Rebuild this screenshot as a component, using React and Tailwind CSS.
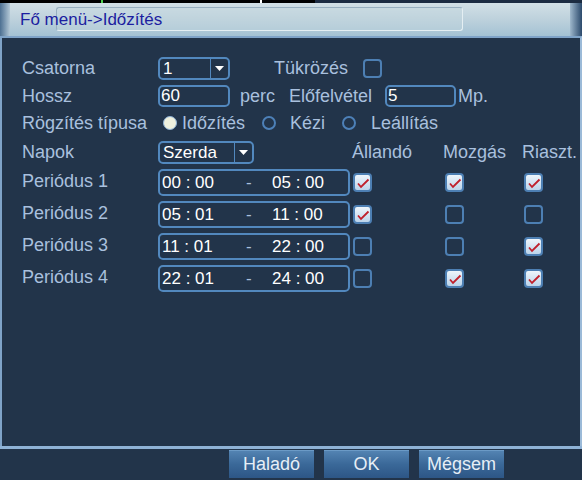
import React from "react";

const font = { fontFamily: '"Liberation Sans", Arial, sans-serif' };

function Check({ on }) {
  return (
    <div
      className={`w-[19px] h-[19px] rounded-[4px] border-2 border-[#4d7fb3] flex items-center justify-center ${
        on ? "bg-gradient-to-b from-[#eef5fb] to-[#bcd4ea]" : ""
      }`}
    >
      {on && (
        <svg width="14" height="12" viewBox="0 0 14 12">
          <path d="M2 6.5 L5 10 L12.5 2.5" fill="none" stroke="#c0202c" strokeWidth="1.8" />
        </svg>
      )}
    </div>
  );
}

function Radio({ on }) {
  return on ? (
    <div className="w-[14px] h-[14px] rounded-full bg-[#eef0de] border border-[#8fb2d6]" />
  ) : (
    <div className="w-[14px] h-[14px] rounded-full border-2 border-[#4d80b8]" />
  );
}

function Box({ className = "", children }) {
  return (
    <div
      className={`border-2 border-[#5288be] rounded-[5px] flex items-center text-white text-[17px] ${className}`}
    >
      {children}
    </div>
  );
}

function Select({ value, width }) {
  return (
    <Box className={`${width} h-[23px] pl-[3px]`}>
      <span className="flex-1 leading-none">{value}</span>
      <div className="w-[18px] h-full border-l border-[#5288be] flex items-center justify-center">
        <svg width="9" height="5" viewBox="0 0 9 5">
          <path d="M0 0 H9 L4.5 5 Z" fill="#ffffff" />
        </svg>
      </div>
    </Box>
  );
}

const periods = [
  ["00 : 00", "05 : 00", [true, true, true]],
  ["05 : 01", "11 : 00", [true, false, false]],
  ["11 : 01", "22 : 00", [false, false, true]],
  ["22 : 01", "24 : 00", [false, true, true]],
];

export default function App() {
  return (
    <div className="w-[582px] h-[480px] bg-[#22344a] text-[#a9c0de] text-[18px] overflow-hidden" style={font}>
      {/* top strip */}
      <div className="h-[3px] flex">
        <div className="w-[315px] bg-black flex">
          <div className="w-[101px]" />
          <div className="w-[2px] bg-[#4cd04c]" />
          <div className="w-[157px]" />
          <div className="w-[2px] bg-white" />
        </div>
        <div className="flex-1 bg-[#1c2c42]" />
      </div>

      {/* header */}
      <div className="h-[33px] flex bg-gradient-to-b from-[#d2e0e6] via-[#bdd1dc] to-[#a4c2d4]">
        <div className="w-[10px] bg-gradient-to-r from-[#4d7092] to-[#b3c8d6]" />
        <div className="flex-1 relative flex items-center">
          <div className="absolute left-[46px] top-[4px] w-[407px] h-[24px] rounded-[3px] border border-[#98b0c0] border-b-[#e4eef2] border-r-[#e4eef2] bg-[#c4d6de]/40" />
          <span className="relative ml-[10px] text-[#1c1ea0] text-[17px]">Fő menü-&gt;Időzítés</span>
        </div>
        <div className="w-[12px] bg-gradient-to-r from-[#9fb8cc] to-[#2c4a6c]" />
      </div>

      {/* main panel */}
      <div className="h-[410px] border-t-[2px] border-x-[2px] border-[#7fa3c8] border-r-[#9bbad8] pt-[19px] pl-[20px]">
        {/* Csatorna */}
        <div className="flex items-center h-[23px]">
          <div className="w-[136px]">Csatorna</div>
          <Select value="1" width="w-[72px]" />
          <div className="ml-[44px] w-[89px]">Tükrözés</div>
          <Check on={false} />
        </div>

        {/* Hossz */}
        <div className="flex items-center h-[22px] mt-[5px]">
          <div className="w-[136px]">Hossz</div>
          <Box className="w-[72px] h-[22px] pl-[1px]">60</Box>
          <div className="w-[59px] pl-[10px]">perc</div>
          <div className="w-[96px]">Előfelvétel</div>
          <Box className="w-[71px] h-[22px] pl-[1px]">5</Box>
          <div className="ml-[2px]">Mp.</div>
        </div>

        {/* Rögzítés típusa */}
        <div className="flex items-center h-[22px] mt-[5px]">
          <div className="w-[141px]">Rögzítés típusa</div>
          <Radio on />
          <div className="w-[85px] pl-[5px]">Időzítés</div>
          <Radio on={false} />
          <div className="w-[66px] pl-[14px]">Kézi</div>
          <Radio on={false} />
          <div className="pl-[15px]">Leállítás</div>
        </div>

        {/* Napok */}
        <div className="flex items-center h-[23px] mt-[7px]">
          <div className="w-[136px]">Napok</div>
          <Select value="Szerda" width="w-[96px]" />
          <div className="ml-[98px] w-[91px]">Állandó</div>
          <div className="w-[79px]">Mozgás</div>
          <div>Riaszt.</div>
        </div>

        {/* Periods */}
        <div className="flex flex-col gap-[5px] mt-[5px]">
          {periods.map(([from, to, checks], i) => (
            <div key={i} className="flex items-center h-[27px]">
              <div className="w-[136px] -mt-[3px]">Periódus {i + 1}</div>
              <Box className="w-[192px] h-[27px] pl-[2px]">
                <span className="w-[84px]">{from}</span>
                <span className="w-[26px] text-[#a9c0de]">-</span>
                <span>{to}</span>
              </Box>
              <div className="w-[95px] pl-[3px]">
                <Check on={checks[0]} />
              </div>
              <div className="w-[79px]">
                <Check on={checks[1]} />
              </div>
              <div>
                <Check on={checks[2]} />
              </div>
            </div>
          ))}
        </div>
      </div>

      {/* bottom bar */}
      <div className="border-t-[3px] border-[#8fb2d6] h-[32px] flex items-end pl-[229px] gap-[10px]">
        {["Haladó", "OK", "Mégsem"].map((b) => (
          <div
            key={b}
            className="w-[85px] h-[28px] flex items-center justify-center bg-gradient-to-b from-[#5383b2] via-[#3a6898] to-[#2d5686] text-[#e6eef6] text-[18px] border-t border-[#6b9ac6]"
          >
            {b}
          </div>
        ))}
      </div>
    </div>
  );
}
